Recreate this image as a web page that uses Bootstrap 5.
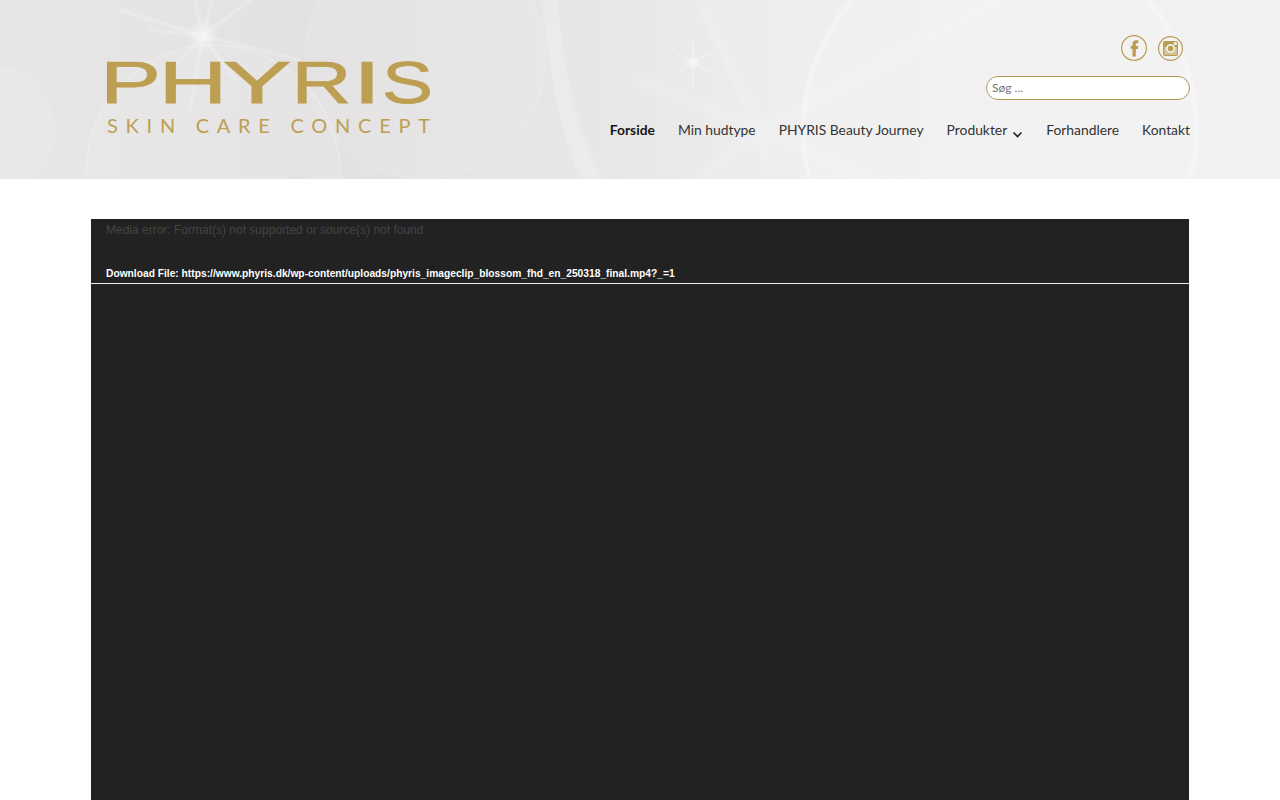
<!DOCTYPE html>
<html lang="da">
<head>
<meta charset="utf-8">
<title>PHYRIS Skin Care Concept</title>
<link href="https://cdn.jsdelivr.net/npm/bootstrap@5.3.0/dist/css/bootstrap.min.css" rel="stylesheet">
<style>
body{background:#fff;font-family:Lato,"Liberation Sans",sans-serif;color:#222}
.site-head{height:179px;background:linear-gradient(90deg,#e8e7e7 0,#e3e1e2 300px,#e8e7e8 600px,#eeeeee 800px,#f2f2f2 1280px)}
.head-art{left:0;top:0;width:1280px;height:179px}
.head-inner{width:1100px;height:179px;z-index:1}
.brand-logo{margin:60px 0 0 17px;width:323px;height:75px}
.brand-logo svg{overflow:visible}
.logo-main{font-family:"Liberation Sans",sans-serif;font-size:58.6px;fill:#bd9f52;stroke:#bd9f52;stroke-width:.75px}
.logo-sub{font-family:Lato,"Liberation Sans",sans-serif;font-weight:400;font-size:20px;fill:#bd9f52}
.social-row{padding-top:35px;padding-right:7px;gap:10px;height:76px}
.search-field.form-control{width:204px;height:24px;min-height:0;margin:0;padding:0 5px 1px;font-size:12px;line-height:20px;border:1px solid #b39a52;border-radius:12px;background:#fff;font-family:Lato,sans-serif;color:#555;box-shadow:none}
.search-field::placeholder{color:#777;opacity:1}
.main-menu{gap:23px;margin-top:21px;font-size:13.85px;line-height:18px}
.main-menu .nav-link{padding:0;color:#333;white-space:nowrap}
.main-menu .nav-link.active{color:#161616;font-weight:700}
.menu-chev{margin-left:5px;vertical-align:-4px}
.video-shell{width:1098px;height:618px;margin:40px 0 0 91px;background:#222;font-family:"Liberation Sans",Arial,sans-serif}
.video-top{height:65px;padding:4px 15px 0;border-bottom:1px solid #eee}
.media-err{font-size:12px;line-height:15px;color:#444;margin:0}
.media-dl{font-size:10.24px;line-height:12px;font-weight:700;color:#fff;margin:0 0 3px}
</style>
</head>
<body class="overflow-hidden vh-100 m-0">
<header class="site-head position-relative overflow-hidden">
  <svg class="head-art position-absolute" viewBox="0 0 1280 179" aria-hidden="true">
    <defs>
      <radialGradient id="glow"><stop offset="0" stop-color="#fff" stop-opacity=".6"/><stop offset="1" stop-color="#fff" stop-opacity="0"/></radialGradient>
      <filter id="soft" x="-20%" y="-20%" width="140%" height="140%"><feGaussianBlur stdDeviation="1.2"/></filter>
      <filter id="softer" x="-20%" y="-20%" width="140%" height="140%"><feGaussianBlur stdDeviation="4"/></filter>
    </defs>
    <circle cx="213" cy="172" r="127" fill="#fff" fill-opacity=".08" stroke="#fff" stroke-opacity=".22" stroke-width="2"/>
    <circle cx="425" cy="58" r="120" fill="#fff" fill-opacity=".05" stroke="#fff" stroke-opacity=".12" stroke-width="2"/>
    <circle cx="1000" cy="130" r="197" fill="#fff" fill-opacity=".1" stroke="#fff" stroke-opacity=".3" stroke-width="5" filter="url(#soft)"/>
    <circle cx="-10" cy="130" r="65" fill="#fff" fill-opacity=".1"/>
    <path d="M543 0C546 60 560 130 580 179H603C575 130 562 60 558 0Z" fill="#fff" fill-opacity=".2" filter="url(#soft)"/>
    <g stroke="#fff" fill="none" stroke-linecap="round">
      <path d="M203 36L195 0M203 36L212 0M203 36L250 0M203 36L170 72M203 36L190 110M203 36L235 80M203 36L120 10M203 36L300 60M203 36L150 30" stroke-width="2.5" stroke-opacity=".3" filter="url(#soft)"/>
      <path d="M760 130L700 0M760 130L640 80M760 130L700 179M760 130L1000 0M760 130L870 179M760 130L770 179" stroke-width="8" stroke-opacity=".22" filter="url(#softer)"/>
      <path d="M693 62L693 40M693 62L693 88M693 62L668 48M693 62L718 50M693 62L672 76M693 62L714 74" stroke-width="1" stroke-opacity=".45"/>
    </g>
    <circle cx="203" cy="36" r="16" fill="url(#glow)"/>
    <circle cx="693" cy="62" r="8" fill="url(#glow)"/>
  </svg>
  <div class="head-inner position-relative mx-auto d-flex justify-content-between align-items-start">
    <a href="#" class="d-block brand-logo" aria-label="PHYRIS Skin Care Concept">
      <svg width="323" height="75" viewBox="0 0 323 75" class="d-block">
        <text class="logo-main" y="42.5"><tspan x="-7" textLength="61" lengthAdjust="spacingAndGlyphs">P</tspan><tspan x="51.5" textLength="69" lengthAdjust="spacingAndGlyphs">H</tspan><tspan x="115.5" textLength="69" lengthAdjust="spacingAndGlyphs">Y</tspan><tspan x="184.5" textLength="60" lengthAdjust="spacingAndGlyphs">R</tspan><tspan x="245.5" textLength="29" lengthAdjust="spacingAndGlyphs">I</tspan><tspan x="275" textLength="51" lengthAdjust="spacingAndGlyphs">S</tspan></text>
        <text class="logo-sub" x="0" y="72.5" textLength="323" lengthAdjust="spacing">SKIN CARE CONCEPT</text>
      </svg>
    </a>
    <div class="d-flex flex-column align-items-end">
      <div class="social-row d-flex align-items-start">
        <a href="#" aria-label="Facebook" class="d-block">
          <svg width="26" height="26" viewBox="0 0 26 26" class="d-block"><circle cx="13" cy="13" r="12.4" fill="none" stroke="#b99c50" stroke-width="1.2"/><path d="M14.8 21.5h-3.3v-7.7H9.7v-2.9h1.8V9.1c0-2.4 1.1-3.8 3.7-3.8h2.1v2.9h-1.4c-1 0-1.1.4-1.1 1.2v1.7h2.5l-.4 2.9h-2.1z" fill="#b99c50"/></svg>
        </a>
        <a href="#" aria-label="Instagram" class="d-block">
          <svg width="26" height="26" viewBox="0 0 26 26" class="d-block"><circle cx="13.5" cy="13.5" r="11.9" fill="none" stroke="#b99c50" stroke-width="1.2"/><rect x="6" y="6" width="15" height="15" rx="2" fill="#b99c50"/><rect x="7.2" y="11.8" width="12.6" height="8" fill="#d8c79c"/><circle cx="13.5" cy="13.4" r="4.4" fill="#efefee"/><circle cx="13.5" cy="13.4" r="2.7" fill="#b99c50"/><rect x="16.8" y="7.2" width="3" height="2.8" fill="#efefee"/></svg>
        </a>
      </div>
      <input type="search" class="search-field form-control" placeholder="Søg ...">
      <nav class="main-menu nav flex-nowrap">
        <a class="nav-link active" href="#">Forside</a>
        <a class="nav-link" href="#">Min hudtype</a>
        <a class="nav-link" href="#">PHYRIS Beauty Journey</a>
        <a class="nav-link" href="#">Produkter<svg class="menu-chev" width="11" height="8" viewBox="0 0 11 8"><path d="M1.5 1.5l4 4 4-4" fill="none" stroke="#222" stroke-width="1.6"/></svg></a>
        <a class="nav-link" href="#">Forhandlere</a>
        <a class="nav-link" href="#">Kontakt</a>
      </nav>
    </div>
  </div>
</header>
<main class="video-shell">
  <div class="video-top d-flex flex-column justify-content-between">
    <p class="media-err">Media error: Format(s) not supported or source(s) not found</p>
    <p class="media-dl">Download File: https://www.phyris.dk/wp-content/uploads/phyris_imageclip_blossom_fhd_en_250318_final.mp4?_=1</p>
  </div>
</main>
</body>
</html>
